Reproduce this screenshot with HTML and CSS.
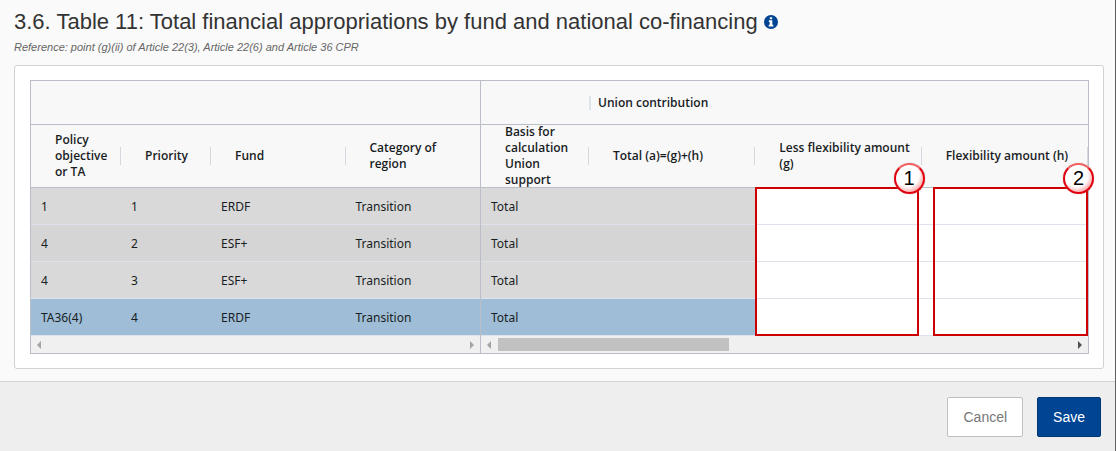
FILE: index.html
```html
<!DOCTYPE html>
<html lang="en">
<head>
<meta charset="utf-8">
<title>Table 11: Total financial appropriations</title>
<link rel="stylesheet" href="styles.css">
</head>
<body>
<main class="content">
  <h1 class="title">3.6. Table 11: Total financial appropriations by fund and national co-financing
    <svg class="info" viewBox="0 0 14 14" role="img" aria-label="Information"><circle cx="7" cy="7" r="7" fill="#004494"/><path fill="#fff" d="M5.8 2.2h2.4v2H5.8zM4.8 5.3h3.5v4.5h1v1.6H4.7V9.8h1V6.9h-.9z"/></svg>
  </h1>
  <p class="reference">Reference: point (g)(ii) of Article 22(3), Article 22(6) and Article 36 CPR</p>
  <section class="panel">
    <div class="grid">
      <div class="pane pane-frozen">
        <table class="table">
          <colgroup><col class="col-small"><col class="col-small"><col><col></colgroup>
          <thead>
            <tr class="group-row"><th colspan="4"></th></tr>
            <tr class="head-row">
              <th><div class="label">Policy objective or TA</div></th>
              <th><div class="label">Priority</div></th>
              <th><div class="label">Fund</div></th>
              <th class="last"><div class="label">Category of region</div></th>
            </tr>
          </thead>
          <tbody>
            <tr class="row"><td>1</td><td>1</td><td>ERDF</td><td>Transition</td></tr>
            <tr class="row alt"><td>4</td><td>2</td><td>ESF+</td><td>Transition</td></tr>
            <tr class="row"><td>4</td><td>3</td><td>ESF+</td><td>Transition</td></tr>
            <tr class="row assist"><td>TA36(4)</td><td>4</td><td>ERDF</td><td>Transition</td></tr>
          </tbody>
        </table>
        <div class="scrollbar">
          <svg class="arrow" viewBox="0 0 4 8"><path fill="#a3a3a3" d="M4 0v8L0 4z"/></svg>
          <div class="track"></div>
          <svg class="arrow" viewBox="0 0 4 8"><path fill="#a3a3a3" d="M0 0v8l4-4z"/></svg>
        </div>
      </div>
      <div class="pane">
        <table class="table">
          <colgroup><col class="col-basis"><col><col><col></colgroup>
          <thead>
            <tr class="group-row"><th></th><th colspan="3"><div class="group-label">Union contribution</div></th></tr>
            <tr class="head-row">
              <th><div class="label">Basis for calculation Union support</div></th>
              <th><div class="label">Total (a)=(g)+(h)</div></th>
              <th><div class="label">Less flexibility amount (g)</div></th>
              <th><div class="label">Flexibility amount (h)</div></th>
            </tr>
          </thead>
          <tbody>
            <tr class="row"><td>Total</td><td></td><td class="edit"><div class="mark mark-one"><span class="badge">1</span></div></td><td class="edit"><div class="mark mark-two"><span class="badge">2</span></div></td></tr>
            <tr class="row alt"><td>Total</td><td></td><td class="edit"></td><td class="edit"></td></tr>
            <tr class="row"><td>Total</td><td></td><td class="edit"></td><td class="edit"></td></tr>
            <tr class="row assist"><td>Total</td><td></td><td class="edit"></td><td class="edit"></td></tr>
          </tbody>
        </table>
        <div class="scrollbar">
          <svg class="arrow" viewBox="0 0 4 8"><path fill="#a3a3a3" d="M4 0v8L0 4z"/></svg>
          <div class="track"><div class="thumb"></div></div>
          <svg class="arrow" viewBox="0 0 4 8"><path fill="#505050" d="M0 0v8l4-4z"/></svg>
        </div>
      </div>
    </div>
  </section>
</main>
<footer class="footer">
  <button class="button" type="button">Cancel</button>
  <button class="button primary" type="button">Save</button>
</footer>
</body>
</html>
```
FILE: styles.css
```css
* { box-sizing: border-box; }
body {
  margin: 0;
  min-height: 100vh;
  display: flex;
  flex-direction: column;
  border-right: 1px solid #5f5f5f;
  background: #fafafa;
  color: #333;
  font-family: "Liberation Sans", Arial, sans-serif;
}
.content { padding: 8px 11px 12px 14px; }
.title {
  margin: 0;
  font-size: 22px;
  line-height: 28px;
  font-weight: 400;
}
.info { width: 14px; height: 14px; }
.reference {
  margin: 4px 0 11px;
  font-size: 11px;
  line-height: 14px;
  font-style: italic;
  color: #666;
}
.panel {
  padding: 14px 14px 14px 15px;
  border: 1px solid #cfd2d6;
  border-radius: 3px;
  background: #fff;
}
.grid {
  display: grid;
  grid-template-columns: 450px 1fr;
  border: 1px solid #babfc7;
  font-family: "Noto Sans", "Open Sans", sans-serif;
  font-size: 12px;
  color: #181d1f;
}
.pane-frozen { border-right: 1px solid #babfc7; }
.table {
  width: 100%;
  table-layout: fixed;
  border-collapse: separate;
  border-spacing: 0;
}
.col-small { width: 90px; }
.col-basis { width: 108px; }
th {
  position: relative;
  padding: 0;
  border-bottom: 1px solid #babfc7;
  background: #f8f8f8;
  text-align: left;
  font-family: "Open Sans", "Noto Sans", sans-serif;
  font-weight: 600;
  line-height: 16px;
}
.group-row th { height: 44px; }
.head-row th { height: 63px; }
.group-label { padding-left: 7px; border-left: 2px solid #dde2eb; line-height: 14px; }
.label {
  margin: -1px 0;
  padding: 0 8px 0 24px;
}
.head-row th::after {
  content: "";
  position: absolute;
  top: 22px;
  right: 0;
  width: 1px;
  height: 18px;
  background: #d5d8de;
}
.head-row .last::after { display: none; }
td {
  position: relative;
  height: 37px;
  padding: 0 10px;
  border-bottom: 1px solid #dde2eb;
}
.row { background: #d9d9d9; }
.alt { background: #d5d5d5; }
.assist { background: #9fbdd6; }
.edit { background: #fff; }
.mark {
  position: absolute;
  top: -1px;
  height: 149px;
  border: 2px solid #c00;
  z-index: 1;
}
.mark-one { left: 0; right: 3px; }
.mark-two { left: 11px; right: 0; }
.badge {
  position: absolute;
  top: -26px;
  right: -8px;
  width: 31px;
  height: 31px;
  border: 2px solid #e0000f;
  border-top-color: #f06060;
  border-radius: 50%;
  background: radial-gradient(circle at 42% 38%, #fff 50%, #f99 80%);
  box-shadow: 0 0 1px #b88;
  color: #000;
  font: 20px/27px "Liberation Sans", Arial, sans-serif;
  text-align: center;
}
.scrollbar {
  display: flex;
  align-items: center;
  gap: 5px;
  height: 17px;
  padding: 0 6px;
  background: #f0f0f0;
}
.arrow { width: 4px; height: 8px; flex: none; }
.track { flex: 1; }
.thumb { width: 40%; height: 13px; margin-left: 2px; background: #c1c1c1; }
.footer {
  flex: 1;
  display: flex;
  justify-content: flex-end;
  align-items: flex-start;
  gap: 14px;
  padding: 15px 14px;
  border-top: 1px solid #cfd2d6;
  background: #eee;
}
.button {
  height: 40px;
  padding: 0 15px;
  border: 1px solid #bfbfbf;
  border-radius: 2px;
  background: #fff;
  color: #777;
  font: 14px "Liberation Sans", Arial, sans-serif;
}
.primary { border-color: #003776; background: #004494; color: #fff; }
```
